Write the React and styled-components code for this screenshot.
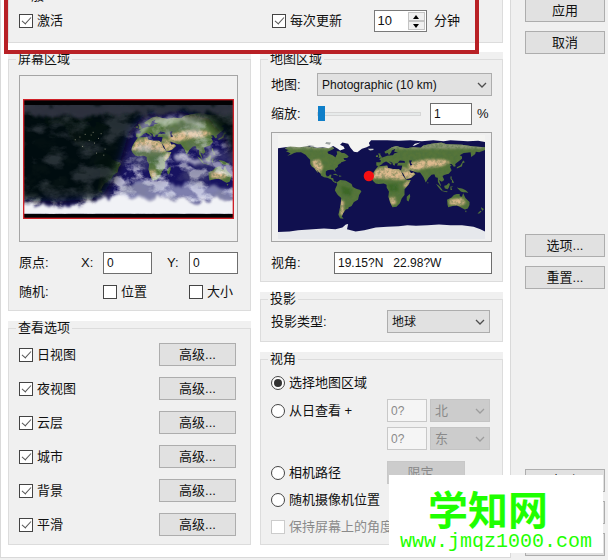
import React, { useState } from "react";
import styled, { createGlobalStyle } from "styled-components";

const layers = ["日视图", "夜视图", "云层", "城市", "背景", "平滑"];

// continents in lon / -lat degrees
const land = [
  "M-168-66L-162-70-156-71-141-70-128-70-115-68-108-68-95-68-94-72-85-69-82-67-87-64-94-61-93-58-85-55-82-53-80-51-79-54-77-57-78-62-73-62-69-59-65-59-62-57-57-53-60-50-66-50-65-47-61-46-66-44-70-43-71-41-74-40-76-37-76-35-81-31-80-26-82-28-84-30-89-30-94-29-97-27-97-22-95-18-91-19-90-21-87-21-88-16-84-15-83-10-79-9-78-8-80-7-84-9-87-13-94-16-100-17-105-20-106-23-110-27-113-31-110-24-112-26-115-30-117-33-121-35-124-40-124-47-128-51-132-56-140-60-148-60-152-59-158-56-164-54-158-58-162-60-166-62-161-64Z",
  "M-78-8L-72-12-62-11-52-5-50 0-44 3-37 5-35 8-39 14-41 22-48 26-52 33-57 35-58 38-62 39-65 43-67 46-69 51-66 55-72 54-75 48-73 40-71 30-70 19-76 14-81 6-80 2-77-4Z",
  "M-6-36L10-37 11-33 20-31 30-31 34-28 37-20 43-12 51-12 47-4 40 4 40 14 35 20 32 28 26 34 19 35 15 27 12 17 13 8 9 1 9-4 4-6-5-5-10-6-15-11-17-15-16-21-12-28Z",
  "M49 12L50 16 47 25 44 23 44 17Z",
  "M-9-43L-9-37-5-36 0-39 3-42 8-44 12-42 16-39 18-40 13-45 19-42 20-38 23-37 24-41 29-41 27-37 36-37 35-32 34-28 39-21 43-13 52-16 59-22 56-25 51-24 48-30 57-27 62-25 67-25 70-21 73-17 77-8 80-13 82-16 87-21 92-22 94-17 98-16 98-9 103-1 103-4 100-12 105-9 109-12 106-19 110-21 117-23 122-29 119-35 122-37 118-39 122-40 126-35 129-36 128-40 132-43 140-49 140-53 136-55 143-59 155-60 156-52 163-57 164-61 170-60 180-64 180-69 160-70 140-73 113-74 104-77 87-75 73-72 68-68 55-69 44-67 33-69 26-71 18-69 12-65 5-61 7-58 11-59 13-55 17-60 18-63 24-66 22-61 29-60 22-58 20-55 10-54 4-52-1-50-4-48-1-46-2-43Z",
  "M-5-50L1-51 0-53-2-56-2-58-6-58-4-54Z M-10-52L-6-52-6-55-9-55Z",
  "M131-32L136-34 140-36 141-41 145-43 142-46 140-42 137-37 131-34Z",
  "M95-5L100-2 106 5 104 6 98-1Z M105 6L115 8 114 9 105 7Z M109-2L113-3 117-7 119-5 117 1 115 4 110 2Z",
  "M120-1L125-1 121 1 123 5 120 5Z M120-18L122-18 122-14 124-12 126-7 122-8 123-11 120-14Z",
  "M131 1L136 2 141 3 147 6 151 10 146 9 142 9 138 8 134 4Z",
  "M114 22L122 18 126 14 131 12 136 12 136 16 140 17 142 11 146 19 153 26 153 31 150 37 145 39 139 36 136 34 131 32 124 33 116 35 115 31Z",
  "M145 41L148 41 147 44Z M173 35L178 38 176 41 174 39Z M172 41L174 42 170 46 167 46Z",
  "M-85-22L-80-23-75-20-77-20Z M-74-20L-69-19-71-18-74-18Z M80-9L82-7 80-6Z",
].join(" ");

const ice =
  "M-180-90H180V-78L168-80 150-79 120-81 108-79 90-81 70-79 50-81 30-80 10-81-18-81-22-76-20-72-26-69-34-66-42-60-48-61-54-68-58-75-68-77-72-73-66-70-64-66-72-63-76-66-84-71-92-67-102-69-112-68-126-71-142-69-158-70-180-67Z";
const antarctica =
  "M-180 78L-160 77-145 75-120 73-100 72-80 73-68 70-62 65-58 64-60 73-45 77-30 75-10 70 10 69 30 68 45 66 60 67 80 66 100 65 120 66 140 66 160 69 172 73 180 77V90H-180Z";
const desert =
  "M-17-15L-10-30 10-36 34-30 42-12 24-13 0-15Z M36-34L50-30 60-24 50-14 40-16Z M46-40L66-46 84-48 110-47 120-43 104-36 76-33 60-28 48-32Z M-122-46L-108-47-102-36-106-24-116-31Z M118 22L140 19 147 29 134 32 118 30Z M13 18L24 18 25 29 17 31Z M-72 22L-66 24-65 50-71 48Z M44-10L52-12 42 2 38-3Z";

function Continents({ id }) {
  return (
    <g>
      <defs>
        <clipPath id={id + "-land"}>
          <path d={land} />
        </clipPath>
        <filter id={id + "-soft"}>
          <feGaussianBlur stdDeviation="2" />
        </filter>
        <filter id={id + "-grain"} x="0" y="0" width="1" height="1">
          <feTurbulence type="fractalNoise" baseFrequency="0.16" numOctaves="4" seed="7" />
          <feColorMatrix values="0 0 0 0 .07  0 0 0 0 .16  0 0 0 0 .05  3 0 0 0 -1.2" />
        </filter>
      </defs>
      <path d={land} fill="#56753a" />
      <g clipPath={`url(#${id}-land)`}>
        <path d="M-180-90H180V-66H-180Z" fill="#8b9673" filter={`url(#${id}-soft)`} />
        <path d={desert} fill="#dcb98d" filter={`url(#${id}-soft)`} />
        <path d="M-70-2L-50 4-54 16-68 12ZM10-5L28-6 30 8 14 8Z" fill="#3d6726" filter={`url(#${id}-soft)`} />
        <rect x="-180" y="-90" width="360" height="180" filter={`url(#${id}-grain)`} opacity=".5" />
      </g>
      <path d="M28-42L32-46 40-45 41-42 34-42Z M48-46L53-46 51-42 54-38 50-37Z" fill="#10104f" />
    </g>
  );
}

function WorldMap() {
  return (
    <MapSvg viewBox="-180 -90 360 180" preserveAspectRatio="none" aria-label="世界地图">
      <rect x="-180" y="-88" width="360" height="170" fill="#10104f" />
      <Continents id="day" />
      <path d={ice} fill="#f4f4f2" />
      <path d="M-130-73L-116-71-120-69ZM-98-75L-90-73-88-77-96-78Z" fill="#9ca3a2" />
      <path d={antarctica} fill="#e6e8ec" />
      <path d="M-24-66L-14-66-14-64-20-63Z" fill="#c9cdc5" />
      <path d="M54-71L58-75 68-77 58-72Z" fill="#eee" />
      <circle cx="-22" cy="-19" r="9" fill="#f50f12" />
    </MapSvg>
  );
}

function NightMap() {
  return (
    <NightSvg viewBox="0 0 636 358" preserveAspectRatio="none" aria-label="屏幕预览">
      <defs>
        <clipPath id="frame">
          <rect y="18" width="636" height="324" />
        </clipPath>
        <filter id="clouds" x="0" y="0" width="1" height="1">
          <feTurbulence type="fractalNoise" baseFrequency="0.018 0.026" numOctaves="6" seed="12" />
          <feColorMatrix values="0 0 0 0 .95  0 0 0 0 .95  0 0 0 0 1  5 0 0 0 -2.4" />
        </filter>
        <filter id="haze" x="0" y="0" width="1" height="1">
          <feTurbulence type="fractalNoise" baseFrequency="0.012 0.02" numOctaves="5" seed="4" />
          <feColorMatrix values="0 0 0 0 .2  0 0 0 0 .21  0 0 0 0 .26  4 0 0 0 -1.8" />
        </filter>
        <filter id="dusk" x="-20%" y="-20%" width="140%" height="140%">
          <feGaussianBlur stdDeviation="15" />
        </filter>
        <filter id="edge" x="-10%" y="-50%" width="120%" height="200%">
          <feTurbulence type="fractalNoise" baseFrequency="0.03" numOctaves="4" seed="3" />
          <feDisplacementMap in="SourceGraphic" scale="40" />
          <feGaussianBlur stdDeviation="4" />
        </filter>
        <linearGradient id="fade" x1="0" x2="0" y1="0" y2="1">
          <stop offset="0" stopColor="#fff" stopOpacity=".15" />
          <stop offset=".5" stopColor="#fff" stopOpacity=".5" />
          <stop offset="1" stopColor="#fff" />
        </linearGradient>
        <mask id="south">
          <rect width="636" height="358" fill="url(#fade)" />
        </mask>
      </defs>
      <rect width="636" height="358" fill="#020204" />
      <g clipPath="url(#frame)">
        <rect y="18" width="636" height="324" fill="#171360" />
        <g transform="translate(357 180) scale(1.77 1.8)">
          <Continents id="night" />
        </g>
        <g mask="url(#south)">
          <rect width="636" height="358" filter="url(#clouds)" />
        </g>
        <path d="M300 260L340 236 400 250 452 262 520 250 600 268 636 262V300H300Z" fill="#c3c7e2" opacity=".6" filter="url(#edge)" />
        <path d="M450 176L480 160 500 172 540 182 566 150 600 160 570 196 520 190Z" fill="#fff" opacity=".6" filter="url(#edge)" />
        <path d="M340 100L372 70 420 56 520 62 560 90 500 74 420 72 370 92 350 124Z" fill="#dfe6dc" opacity=".5" filter="url(#edge)" />
        <path
          d="M-60-60H700V210L640 190 612 120 560 60 460 36 370 48 322 96 296 180 272 240 236 296 100 308-60 300Z"
          fill="#06070c"
          opacity=".97"
          filter="url(#dusk)"
        />
        <rect width="636" height="358" filter="url(#haze)" opacity=".3" />
        <path d="M-10 14H646V46L500 34 380 40 200 54-10 48Z" fill="#303642" opacity=".9" filter="url(#edge)" />
        <path d="M-20 310L60 314 140 322 220 300 300 290 420 296 520 302 600 298 660 304V380H-20Z" fill="#f1f2f6" filter="url(#edge)" />
        <g fill="#c4c0a0" opacity=".6">
          {[
            [170, 112], [186, 104], [198, 122], [210, 98], [214, 130], [226, 116], [178, 140],
            [234, 102], [156, 120], [246, 148], [220, 160], [204, 106], [242, 166],
          ].map(([x, y]) => (
            <rect key={x} x={x} y={y} width="3" height="3" />
          ))}
        </g>
      </g>
      <rect x="2" y="2" width="632" height="354" fill="none" stroke="#cf2027" strokeWidth="4" />
    </NightSvg>
  );
}

function Check({ label, type = "checkbox", ...rest }) {
  return (
    <Label>
      <Tick type={type} {...rest} />
      {label}
    </Label>
  );
}

function Dropdown({ label, value, ...rest }) {
  return (
    <SelectBox {...rest}>
      <Select aria-label={label} disabled={rest.$off}>
        <option>{value}</option>
      </Select>
      <Chevron viewBox="0 0 10 6">
        <path d="M1 1L5 5L9 1" fill="none" stroke="currentColor" strokeWidth="1.3" />
      </Chevron>
    </SelectBox>
  );
}

function Group({ title, children, ...rest }) {
  return (
    <Panel {...rest}>
      <Fieldset>
        <Legend>{title}</Legend>
        {children}
      </Fieldset>
    </Panel>
  );
}

export default function App() {
  const [minutes, setMinutes] = useState(10);

  return (
    <Window>
      <GlobalStyle />
      <Pane>
        <Group title="一般">
          <General>
            <Check label="激活" defaultChecked />
            <Interval>
              <Check label="每次更新" defaultChecked />
              <Spinner>
                <SpinInput aria-label="分钟" value={minutes} onChange={(e) => setMinutes(e.target.value)} />
                <Arrows>
                  <Arrow aria-label="增加" onClick={() => setMinutes(+minutes + 1)}>
                    <svg width="6" height="4" viewBox="0 0 6 4"><path d="M0 4L3 0L6 4Z" /></svg>
                  </Arrow>
                  <Arrow aria-label="减少" onClick={() => setMinutes(+minutes - 1)}>
                    <svg width="6" height="4" viewBox="0 0 6 4"><path d="M0 0L3 4L6 0Z" /></svg>
                  </Arrow>
                </Arrows>
              </Spinner>
              <span>分钟</span>
            </Interval>
          </General>
        </Group>
        <Highlight />
        <Columns>
          <Column>
            <Group title="屏幕区域">
              <ScreenBody>
                <Preview>
                  <NightMap />
                </Preview>
                <Origin>
                  <span>原点:</span>
                  <label htmlFor="x">X:</label>
                  <Field id="x" defaultValue="0" />
                  <YLabel htmlFor="y">Y:</YLabel>
                  <Field id="y" defaultValue="0" />
                </Origin>
                <Origin>
                  <span>随机:</span>
                  <span />
                  <Check label="位置" />
                  <span />
                  <Check label="大小" />
                </Origin>
              </ScreenBody>
            </Group>
            <Group title="查看选项" $grow>
              <Layers>
                {layers.map((name) => (
                  <Layer key={name}>
                    <Check label={name} defaultChecked />
                    <Button $width="77px">高级...</Button>
                  </Layer>
                ))}
              </Layers>
            </Group>
          </Column>
          <Column>
            <Group title="地图区域">
              <MapBody>
                <Row>
                  <Caption>地图:</Caption>
                  <Dropdown label="地图" value="Photographic (10 km)" $grow />
                </Row>
                <Row>
                  <Caption>缩放:</Caption>
                  <Slider type="range" aria-label="缩放" min="1" max="100" defaultValue="1" />
                  <Field $width="42px" aria-label="缩放百分比" defaultValue="1" />
                  <Percent>%</Percent>
                </Row>
                <MapFrame>
                  <WorldMap />
                </MapFrame>
                <Row>
                  <Caption $wide htmlFor="angle">视角:</Caption>
                  <Field $grow id="angle" defaultValue={"19.15?N\u00a0\u00a0\u00a022.98?W"} />
                </Row>
              </MapBody>
            </Group>
            <Group title="投影">
              <Projection>
                <span>投影类型:</span>
                <Dropdown label="投影类型" value="地球" $width="103px" />
              </Projection>
            </Group>
            <Group title="视角" $grow>
              <Views>
                <ViewRow>
                  <Check type="radio" name="view" label="选择地图区域" defaultChecked />
                </ViewRow>
                <ViewRow>
                  <Check type="radio" name="view" label="从日查看 +" />
                  <Offset>
                    <Field $width="40px" aria-label="纬度" defaultValue="0?" disabled />
                    <Dropdown label="北" value="北" $width="60px" $off />
                  </Offset>
                </ViewRow>
                <ViewRow>
                  <span />
                  <Offset>
                    <Field $width="40px" aria-label="经度" defaultValue="0?" disabled />
                    <Dropdown label="东" value="东" $width="60px" $off />
                  </Offset>
                </ViewRow>
                <ViewRow $apart>
                  <Check type="radio" name="view" label="相机路径" />
                  <Offset>
                    <Button $width="78px" disabled>限定...</Button>
                  </Offset>
                </ViewRow>
                <ViewRow>
                  <Check type="radio" name="view" label="随机摄像机位置" />
                </ViewRow>
                <ViewRow>
                  <Check label="保持屏幕上的角度" disabled />
                </ViewRow>
              </Views>
            </Group>
          </Column>
        </Columns>
      </Pane>
      <Side>
        <Buttons>
          <Button>应用</Button>
          <Button>取消</Button>
        </Buttons>
        <Buttons>
          <Button>选项...</Button>
          <Button>重置...</Button>
        </Buttons>
        <Buttons>
          <Button>帮助</Button>
          <Button>关于</Button>
          <Button>注册</Button>
        </Buttons>
      </Side>
      <Stamp>
        <StampTitle>学知网</StampTitle>
        <StampUrl>www.jmqz1000.com</StampUrl>
      </Stamp>
    </Window>
  );
}

//styles
const GlobalStyle = createGlobalStyle`
  * {
    box-sizing: border-box;
  }
  body {
    margin: 0;
    overflow: hidden;
    background: #f0f0f0;
    color: #111;
    font-family: "Liberation Sans", "Noto Sans CJK SC", sans-serif;
    font-size: 13px;
    line-height: 16px;
  }
  input, select, button {
    margin: 0;
    font: inherit;
    color: inherit;
  }
`;
const Window = styled.main`
  position: relative;
  display: grid;
  grid-template-columns: 1fr 97px;
  margin-top: -20px;
  padding-bottom: 2px;
`;
const Pane = styled.div`
  position: relative;
  padding: 9px 7px 12px;
  background: #fff;
  border: solid #d9d9d9;
  border-width: 0 1px 1px;
`;
const Columns = styled.div`
  display: grid;
  grid-template-columns: 1fr 1fr;
  gap: 9px;
  margin-top: 9px;
`;
const Column = styled.div`
  display: flex;
  flex-direction: column;
  gap: 10px;
  min-width: 0;
`;
const Panel = styled.section`
  display: flex;
  flex-grow: ${({ $grow }) => ($grow ? 1 : 0)};
  background: #f0f0f0;
`;
const Fieldset = styled.fieldset`
  flex: 1;
  min-width: 0;
  margin: 0;
  padding: 0 10px;
  border: 1px solid #dcdcdc;
`;
const Legend = styled.legend`
  margin-left: -3px;
  padding: 0 2px;
  line-height: 14px;
`;
const General = styled.div`
  display: grid;
  grid-template-columns: 253fr 220fr;
  align-items: center;
  padding: 7px 0 10px;
`;
const Interval = styled.div`
  display: flex;
  align-items: center;
  justify-content: space-between;
  padding-right: 32px;
`;
const Spinner = styled.div`
  display: flex;
  width: 53px;
  height: 22px;
  margin-left: 24px;
  padding: 1px;
  background: #fff;
  border: 1px solid #7a7a7a;
`;
const SpinInput = styled.input`
  flex: 1;
  min-width: 0;
  padding: 0 2px;
  border: 0;
`;
const Arrows = styled.div`
  display: flex;
  flex-direction: column;
  width: 17px;
`;
const Arrow = styled.button`
  display: flex;
  flex: 1;
  align-items: center;
  justify-content: center;
  padding: 0;
  background: #f0f0f0;
  border: 1px solid #c4c4c4;
`;
// red marker drawn round the general settings
const Highlight = styled.div`
  position: absolute;
  top: 0;
  left: 3px;
  right: 31px;
  height: 74px;
  border: 4px solid #b82025;
  pointer-events: none;
`;
const Label = styled.label`
  display: flex;
  align-items: center;
  gap: 4px;
  white-space: nowrap;
  &:has(:disabled) {
    color: #8a8a8a;
  }
`;
const Tick = styled.input`
  appearance: none;
  position: relative;
  flex: none;
  width: 14px;
  height: 14px;
  background: #fff;
  border: 1px solid #444;
  border-radius: ${({ type }) => (type === "radio" ? "50%" : 0)};
  &:disabled {
    border-color: #ccc;
  }
  &:checked::after {
    content: "";
    position: absolute;
    ${({ type }) =>
      type === "radio"
        ? "inset: 2px; border-radius: 50%; background: #333;"
        : `left: 4px; top: 0; width: 4px; height: 8px;
           border: solid #555; border-width: 0 1px 1px 0; transform: rotate(42deg);`}
  }
`;
const Field = styled.input`
  flex: ${({ $grow }) => ($grow ? 1 : "none")};
  min-width: 0;
  width: ${({ $width }) => $width || "49px"};
  height: 22px;
  padding: 0 3px;
  background: #fff;
  border: 1px solid #6e6e6e;
  font-size: 12px;
  &:disabled {
    height: 23px;
    background: #f5f5f5;
    border-color: #c8c8c8;
    color: #8a8a8a;
  }
`;
const SelectBox = styled.div`
  position: relative;
  flex: ${({ $grow }) => ($grow ? 1 : "none")};
  width: ${({ $width }) => $width || "auto"};
  height: 23px;
  color: ${({ $off }) => ($off ? "#8a8a8a" : "#111")};
`;
const Select = styled.select`
  appearance: none;
  width: 100%;
  height: 100%;
  padding: 0 4px;
  background: #e1e1e1;
  border: 1px solid #adadad;
  border-radius: 0;
  font-size: ${({ disabled }) => (disabled ? "13px" : "12px")};
  opacity: 1;
  &:disabled {
    background: #ccc;
    border-color: #c4c4c4;
  }
`;
const Chevron = styled.svg`
  position: absolute;
  top: 9px;
  right: 5px;
  width: 10px;
  height: 6px;
  opacity: 0.7;
  pointer-events: none;
`;
const Button = styled.button`
  width: ${({ $width }) => $width || "80px"};
  height: 23px;
  padding: 0;
  background: #e1e1e1;
  border: 1px solid #adadad;
  &:disabled {
    background: #ccc;
    border-color: #c8c8c8;
    color: #8a8a8a;
  }
`;
const ScreenBody = styled.div`
  padding: 9px 2px 7px 0;
`;
const Preview = styled.div`
  padding: 23px 3px 22px;
  margin-bottom: 10px;
  border: 1px solid #a5a5a5;
`;
const NightSvg = styled.svg`
  display: block;
  width: 100%;
  height: 120px;
`;
const Origin = styled.div`
  display: grid;
  grid-template-columns: 1fr 22px 49px 37px 49px;
  align-items: center;
  height: 22px;
  & + & {
    margin-top: 7px;
  }
`;
const YLabel = styled.label`
  padding-left: 15px;
`;
const Layers = styled.div`
  display: flex;
  flex-direction: column;
  gap: 11px;
  padding: 8px 4px 8px 0;
`;
const Layer = styled.div`
  display: flex;
  align-items: center;
  justify-content: space-between;
`;
const MapBody = styled.div`
  display: flex;
  flex-direction: column;
  gap: 7px;
  padding: 7px 0;
`;
const Row = styled.div`
  display: flex;
  align-items: center;
`;
const Caption = styled.label`
  width: ${({ $wide }) => ($wide ? "63px" : "46px")};
`;
const Slider = styled.input`
  appearance: none;
  flex: 1;
  min-width: 0;
  height: 22px;
  margin-right: 9px;
  background: none;
  &::-webkit-slider-runnable-track {
    height: 4px;
    background: #e7eaea;
    border: 1px solid #d6d6d6;
  }
  &::-webkit-slider-thumb {
    appearance: none;
    width: 7px;
    height: 15px;
    margin-top: -7px;
    background: #0f7fc9;
  }
`;
const Percent = styled.span`
  width: 20px;
  padding-left: 5px;
`;
const MapFrame = styled.div`
  margin-bottom: 3px;
  padding: 2px 6px;
  border: 1px solid #a5a5a5;
`;
const MapSvg = styled.svg`
  display: block;
  width: 100%;
  height: 104px;
`;
const Projection = styled.div`
  display: flex;
  align-items: center;
  justify-content: space-between;
  padding: 4px 2px 8px 0;
`;
const Views = styled.div`
  display: flex;
  flex-direction: column;
  gap: 5px;
  padding: 6px 2px 6px 0;
`;
const ViewRow = styled.div`
  display: flex;
  align-items: center;
  justify-content: space-between;
  min-height: 22px;
  margin-top: ${({ $apart }) => ($apart ? "6px" : 0)};
`;
const Offset = styled.div`
  display: flex;
  gap: 3px;
  width: 103px;
`;
const Side = styled.aside`
  display: flex;
  flex-direction: column;
  justify-content: space-between;
  padding: 19px 3px 2px 14px;
`;
const Buttons = styled.div`
  display: flex;
  flex-direction: column;
  gap: 9px;
`;
const Stamp = styled.div`
  position: absolute;
  right: 5px;
  bottom: 7px;
  width: 214px;
  height: 78px;
  padding-top: 9px;
  background: #fff;
  color: #1fff00;
  text-align: center;
`;
const StampTitle = styled.div`
  font: bold 40px/48px "Noto Sans CJK SC", sans-serif;
  padding-right: 16px;
`;
const StampUrl = styled.div`
  font: 20px/20px "Liberation Mono", monospace;
`;
